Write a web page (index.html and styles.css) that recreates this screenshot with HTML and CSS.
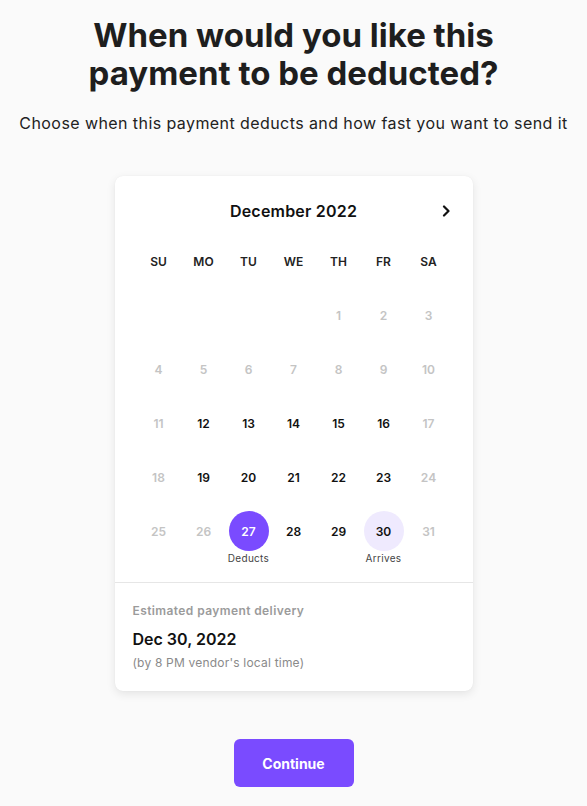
FILE: index.html
```
<!DOCTYPE html>
<html lang="en">
<head>
<meta charset="utf-8">
<title>Schedule payment</title>
<link rel="stylesheet" href="styles.css">
</head>
<body>
<main class="page">
  <h1 class="title">When would you like this<br>payment to be deducted?</h1>
  <p class="subtitle">Choose when this payment deducts and how fast you want to send it</p>

  <section class="card">
    <div class="cal-head">
      <span class="month">December 2022</span>
      <button class="next" aria-label="Next month">
        <svg width="10" height="12" viewBox="0 0 10 12"><path d="M3 1.5 L7.5 6 L3 10.5" fill="none" stroke="#111" stroke-width="2.2" stroke-linecap="round" stroke-linejoin="round"/></svg>
      </button>
    </div>
    <div class="grid">
      <div class="wd">SU</div><div class="wd">MO</div><div class="wd">TU</div><div class="wd">WE</div><div class="wd">TH</div><div class="wd">FR</div><div class="wd">SA</div>

      <div class="day"></div><div class="day"></div><div class="day"></div><div class="day"></div>
      <div class="day off"><span class="num">1</span></div><div class="day off"><span class="num">2</span></div><div class="day off"><span class="num">3</span></div>

      <div class="day off"><span class="num">4</span></div><div class="day off"><span class="num">5</span></div><div class="day off"><span class="num">6</span></div><div class="day off"><span class="num">7</span></div><div class="day off"><span class="num">8</span></div><div class="day off"><span class="num">9</span></div><div class="day off"><span class="num">10</span></div>

      <div class="day off"><span class="num">11</span></div><div class="day"><span class="num">12</span></div><div class="day"><span class="num">13</span></div><div class="day"><span class="num">14</span></div><div class="day"><span class="num">15</span></div><div class="day"><span class="num">16</span></div><div class="day off"><span class="num">17</span></div>

      <div class="day off"><span class="num">18</span></div><div class="day"><span class="num">19</span></div><div class="day"><span class="num">20</span></div><div class="day"><span class="num">21</span></div><div class="day"><span class="num">22</span></div><div class="day"><span class="num">23</span></div><div class="day off"><span class="num">24</span></div>

      <div class="day off"><span class="num">25</span></div><div class="day off"><span class="num">26</span></div>
      <div class="day"><span class="num sel">27</span><span class="tag">Deducts</span></div>
      <div class="day"><span class="num">28</span></div><div class="day"><span class="num">29</span></div>
      <div class="day"><span class="num arr">30</span><span class="tag">Arrives</span></div>
      <div class="day off"><span class="num">31</span></div>
    </div>
    <div class="foot">
      <div class="est">Estimated payment delivery</div>
      <div class="date">Dec 30, 2022</div>
      <div class="note">(by 8 PM vendor's local time)</div>
    </div>
  </section>

  <button class="continue">Continue</button>
</main>
</body>
</html>
```
FILE: styles.css
```
* { box-sizing: border-box; }
html, body { margin: 0; padding: 0; }
body {
  background: #fafafa;
  font-family: "Inter", "Noto Sans", sans-serif;
  color: #1d1d1f;
}
.page {
  display: flex;
  flex-direction: column;
  align-items: center;
  padding-top: 16px;
}
.title {
  margin: 0;
  font-size: 33px;
  line-height: 38px;
  font-weight: 700;
  text-align: center;
  color: #1e1e1e;
  letter-spacing: 0;
}
.subtitle {
  margin: 19px 0 0;
  font-size: 16px;
  line-height: 24px;
  color: #222;
  letter-spacing: 0.42px;
}
.card {
  margin-top: 41px;
  width: 358px;
  background: #fff;
  border-radius: 8px;
  box-shadow: 0 3px 10px rgba(0,0,0,0.09), 0 0 1px rgba(0,0,0,0.08);
}
.cal-head {
  position: relative;
  height: 24px;
  margin-top: 23px;
  display: flex;
  justify-content: center;
  align-items: center;
}
.month {
  font-size: 16px;
  font-weight: 600;
  color: #111;
  letter-spacing: 0.2px;
}
.next {
  position: absolute;
  right: 22px;
  top: 6px;
  width: 10px;
  height: 12px;
  padding: 0;
  border: 0;
  background: none;
  display: flex;
}
.grid {
  margin-top: 11px;
  display: grid;
  grid-template-columns: repeat(7, 45px);
  grid-auto-rows: 54px;
  justify-content: center;
  padding: 0 0 24px 0;
  border-bottom: 1px solid #e6e6e6;
}
.wd {
  display: flex;
  align-items: center;
  justify-content: center;
  font-size: 12px;
  font-weight: 600;
  color: #222;
}
.day {
  position: relative;
  display: flex;
  align-items: center;
  justify-content: center;
}
.num {
  width: 40px;
  height: 40px;
  border-radius: 50%;
  display: flex;
  align-items: center;
  justify-content: center;
  font-size: 12px;
  font-weight: 600;
  color: #111;
}
.off .num { color: #c4c4c4; }
.num.sel { background: #7a4bff; color: #fff; }
.num.arr { background: #efeafe; color: #111; }
.tag {
  position: absolute;
  top: 48px;
  left: 50%;
  transform: translateX(-50%);
  font-size: 10px;
  line-height: 12px;
  color: #444;
  white-space: nowrap;
  letter-spacing: 0.3px;
}
.foot {
  padding: 19px 20px 19px 18px;
}
.est {
  font-size: 12px;
  line-height: 18px;
  font-weight: 600;
  color: #9b9b9b;
  letter-spacing: 0.4px;
}
.date {
  margin-top: 7px;
  font-size: 16px;
  line-height: 24px;
  font-weight: 600;
  color: #111;
}
.note {
  margin-top: 3px;
  font-size: 12px;
  line-height: 18px;
  color: #8a8a8a;
  letter-spacing: 0.2px;
}
.continue {
  margin-top: 48px;
  width: 120px;
  height: 48px;
  border: 0;
  border-radius: 6px;
  background: #7a4bff;
  color: #fff;
  font-family: inherit;
  font-size: 14px;
  font-weight: 700;
}
```
